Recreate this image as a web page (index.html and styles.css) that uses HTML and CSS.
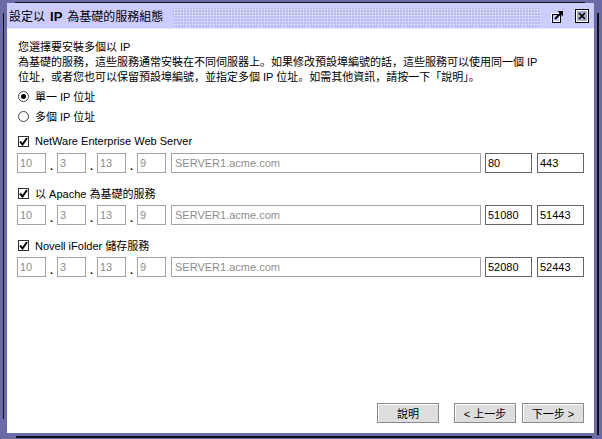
FILE: index.html
```html
<!DOCTYPE html>
<html>
<head>
  <meta charset="UTF-8">
  <link rel="stylesheet" href="styles.css">
</head>
<body>
  <div class="frame">
    <div class="window">
      <div class="titlebar">
        <span class="title">設定以<b>IP</b>為基礎的服務組態</span>
        <span class="grip"></span>
        <span class="tb-btn">
          <svg width="14" height="14" viewBox="0 0 14 14">
            <rect x="1.5" y="4.5" width="8" height="8" fill="none" stroke="#fff" stroke-width="1"/>
            <rect x="2.5" y="5.5" width="8" height="8" fill="none" stroke="#000" stroke-width="1"/>
            <path d="M5 10 L11.5 3.5" stroke="#000" stroke-width="2"/>
            <path d="M7.5 2 H13 V7.5 Z" fill="#000"/>
          </svg>
        </span>
        <span class="tb-btn close-btn">
          <svg width="14" height="14" viewBox="0 0 14 14">
            <rect x="0.5" y="0.5" width="13" height="13" fill="#a8a8c8" stroke="#000"/>
            <rect x="1.5" y="1.5" width="11" height="11" fill="none" stroke="#fff"/>
            <path d="M4 4 L10 10 M10 4 L4 10" stroke="#000" stroke-width="1.6"/>
          </svg>
        </span>
      </div>

      <div class="content">
        <p class="intro">您選擇要安裝多個以 IP<br>為基礎的服務，這些服務通常安裝在不同伺服器上。如果修改預設埠編號的話，這些服務可以使用同一個 IP<br>位址，或者您也可以保留預設埠編號，並指定多個 IP 位址。如需其他資訊，請按一下「說明」。</p>

        <label class="option"><span class="radio checked"></span>單一 IP 位址</label>
        <label class="option"><span class="radio"></span>多個 IP 位址</label>

        <div class="service">
          <label class="option"><span class="check"><svg width="9" height="9" viewBox="0 0 9 9"><path d="M1 4.5 L3.5 7.5 L8 1" fill="none" stroke="#000" stroke-width="2"/></svg></span>NetWare Enterprise Web Server</label>
          <div class="fields">
            <span class="field octet off">10</span><span class="dot">.</span>
            <span class="field octet off">3</span><span class="dot">.</span>
            <span class="field octet off">13</span><span class="dot">.</span>
            <span class="field octet off">9</span>
            <span class="field host off">SERVER1.acme.com</span>
            <span class="field port">80</span>
            <span class="field port">443</span>
          </div>
        </div>

        <div class="service">
          <label class="option"><span class="check"><svg width="9" height="9" viewBox="0 0 9 9"><path d="M1 4.5 L3.5 7.5 L8 1" fill="none" stroke="#000" stroke-width="2"/></svg></span>以 Apache 為基礎的服務</label>
          <div class="fields">
            <span class="field octet off">10</span><span class="dot">.</span>
            <span class="field octet off">3</span><span class="dot">.</span>
            <span class="field octet off">13</span><span class="dot">.</span>
            <span class="field octet off">9</span>
            <span class="field host off">SERVER1.acme.com</span>
            <span class="field port">51080</span>
            <span class="field port">51443</span>
          </div>
        </div>

        <div class="service">
          <label class="option"><span class="check"><svg width="9" height="9" viewBox="0 0 9 9"><path d="M1 4.5 L3.5 7.5 L8 1" fill="none" stroke="#000" stroke-width="2"/></svg></span>Novell iFolder 儲存服務</label>
          <div class="fields">
            <span class="field octet off">10</span><span class="dot">.</span>
            <span class="field octet off">3</span><span class="dot">.</span>
            <span class="field octet off">13</span><span class="dot">.</span>
            <span class="field octet off">9</span>
            <span class="field host off">SERVER1.acme.com</span>
            <span class="field port">52080</span>
            <span class="field port">52443</span>
          </div>
        </div>

        <div class="actions">
          <button class="btn help">說明</button>
          <button class="btn">&lt; 上一步</button>
          <button class="btn">下一步 &gt;</button>
        </div>
      </div>
    </div>
  </div>
</body>
</html>
```

FILE: styles.css
```css
html,
body {
  margin: 0;
  height: 100%;
  width: 100%;
  font-family: "Liberation Sans", "Noto Sans CJK SC", sans-serif;
  font-size: 11px;
  color: #000;
}

/* Window frame, with the broken resize lines of the window manager */
.frame {
  box-sizing: border-box;
  height: 439px;
  width: 602px;
  padding: 3px 8px 6px 7px;
  background:
    linear-gradient(#101018, #101018) 15px 2px / 570px 1px no-repeat,
    linear-gradient(#101018, #101018) 16px 436px / 576px 2px no-repeat,
    linear-gradient(#101018, #101018) 3px 13px / 1px 406px no-repeat,
    linear-gradient(#101018, #101018) 597px 13px / 2px 422px no-repeat,
    #6b6ba6;
}

.window {
  display: flex;
  flex-direction: column;
  height: 100%;
  background: #fff;
}

.titlebar {
  display: flex;
  align-items: center;
  height: 25px;
  padding: 0 5px 0 2px;
  background: #ccccff;
  border-bottom: 1px solid #e8e8ff;
}

.title {
  font-size: 12px;
  white-space: nowrap;
}

.title b {
  margin: 0 5px;
  font-family: "Liberation Sans", sans-serif;
  font-size: 13px;
}

.grip {
  flex: 1;
  align-self: stretch;
  margin: 5px 9px 1px 10px;
  background:
    radial-gradient(circle, #f0f0ff 0 0.9px, transparent 1px) 0 0 / 3px 3px,
    radial-gradient(circle, #a8a8dc 0 0.9px, transparent 1px) 1.5px 1.5px / 3px 3px,
    #c8c8f6;
}

.tb-btn {
  display: flex;
  width: 14px;
  height: 14px;
}

.close-btn {
  margin-left: 11px;
}

.content {
  display: flex;
  flex: 1;
  flex-direction: column;
  padding: 11px 10px 10px 10px;
}

.intro {
  margin: 0 0 1px 1px;
  line-height: 15px;
  white-space: nowrap;
}

.option {
  display: flex;
  align-items: center;
  height: 20px;
  padding-left: 1px;
}

.radio {
  box-sizing: border-box;
  width: 11px;
  height: 11px;
  margin-right: 6px;
  border: 1px solid #444;
  border-radius: 50%;
  background: #fff;
  position: relative;
}

.radio.checked::after {
  content: "";
  position: absolute;
  left: 2px;
  top: 2px;
  width: 5px;
  height: 5px;
  border-radius: 50%;
  background: #000;
}

.check {
  box-sizing: border-box;
  display: flex;
  align-items: center;
  justify-content: center;
  width: 11px;
  height: 11px;
  margin-right: 6px;
  border: 1px solid #333;
  background: #fff;
}

.service {
  margin-bottom: 10px;
}

.service:first-of-type {
  margin-top: 5px;
}

.fields {
  display: flex;
  align-items: center;
  margin-top: 2px;
}

.field {
  box-sizing: border-box;
  height: 20px;
  line-height: 18px;
  padding-left: 2px;
  border: 1px solid #666;
  background: #fff;
  white-space: nowrap;
  overflow: hidden;
}

.field.off {
  border-color: #a4a4a4;
  color: #8e8e8e;
}

.octet {
  width: 29px;
}

.dot {
  width: 11px;
  text-align: center;
  font-weight: bold;
  padding-top: 6px;
}

.host {
  width: 310px;
  margin-left: 5px;
  padding-left: 3px;
}

.port {
  width: 47px;
  margin-left: 4px;
}

.port + .port {
  margin-left: 5px;
}

.actions {
  display: flex;
  justify-content: flex-end;
  margin-top: auto;
}

.btn {
  box-sizing: border-box;
  width: 62px;
  height: 20px;
  margin: 0 0 0 6px;
  padding: 0;
  font-family: "Liberation Sans", "Noto Sans CJK SC", sans-serif;
  font-size: 11px;
  color: #000;
  background: #dedede;
  border: 1px solid #8a8a8a;
  box-shadow: inset 1px 1px 0 #fff;
  text-align: center;
}

.btn.help {
  margin-right: 9px;
}
```
